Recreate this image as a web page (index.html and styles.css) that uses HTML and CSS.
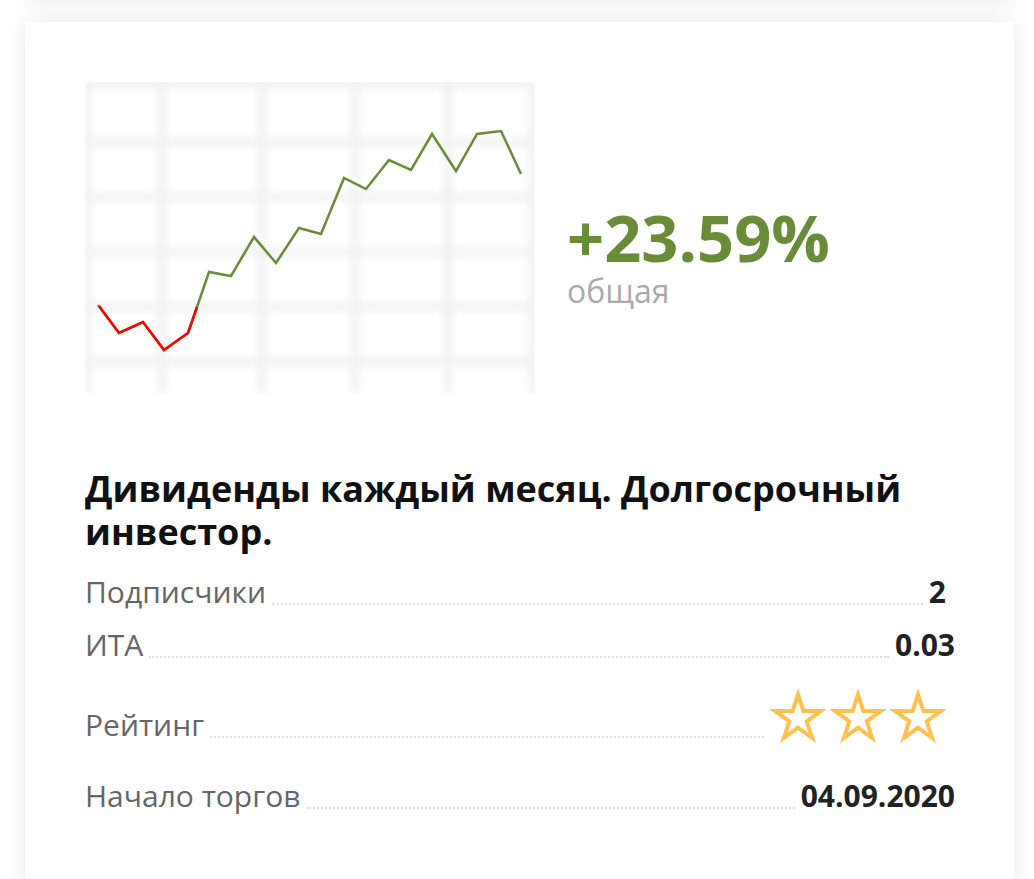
FILE: index.html
```html
<!DOCTYPE html>
<html lang="ru">

<head>
  <meta charset="UTF-8">
  <meta name="viewport" content="width=device-width, initial-scale=1.0">
  <title>Стратегии</title>
  <link rel="stylesheet" href="styles.css">
</head>

<body>
  <div class="feed">
    <div class="card card--prev"></div>

    <article class="card strategy">
      <div class="strategy__top">
        <svg class="chart" width="450" height="312" viewBox="0 0 450 312">
          <defs>
            <filter id="soft" x="-5%" y="-5%" width="110%" height="110%">
              <feGaussianBlur stdDeviation="4" />
            </filter>
          </defs>
          <rect width="450" height="312" fill="#fff" />
          <g class="chart__grid" filter="url(#soft)">
            <path d="M2 0V312M77 0V312M177 0V312M270 0V312M363 0V312M448 0V312" />
            <path d="M0 2H450M0 60H450M0 115H450M0 170H450M0 225H450M0 280H450" />
          </g>
          <polyline class="chart__up" points="13,223 34,251 58,240 79,268 103,251 112,225 124,190 146,194 169,155 191,181 214,146 236,152 259,96 281,107 304,78 326,88 347,52 371,89 392,52 416,49 436,92" />
          <polyline class="chart__down" points="14,224 34,251 58,240 79,268 103,251 112,225" />
        </svg>

        <div class="yield">
          <div class="yield__value">+23.59%</div>
          <div class="yield__label">общая</div>
        </div>
      </div>

      <h2 class="strategy__title">Дивиденды каждый месяц. Долгосрочный инвестор.</h2>

      <ul class="stats">
        <li class="stats__row">
          <span class="stats__label">Подписчики</span>
          <span class="stats__dots"></span>
          <span class="stats__value stats__value--inset">2</span>
        </li>
        <li class="stats__row">
          <span class="stats__label">ИТА</span>
          <span class="stats__dots"></span>
          <span class="stats__value">0.03</span>
        </li>
        <li class="stats__row stats__row--rating">
          <span class="stats__label">Рейтинг</span>
          <span class="stats__dots"></span>
          <span class="stars">
            <svg class="star" width="56" height="54" viewBox="0 0 56 54"><polygon points="28,5.5 33.39,22.08 50.83,22.08 36.72,32.33 42.11,48.92 28,38.67 13.89,48.92 19.28,32.33 5.17,22.08 22.61,22.08" /></svg>
            <svg class="star" width="56" height="54" viewBox="0 0 56 54"><polygon points="28,5.5 33.39,22.08 50.83,22.08 36.72,32.33 42.11,48.92 28,38.67 13.89,48.92 19.28,32.33 5.17,22.08 22.61,22.08" /></svg>
            <svg class="star" width="56" height="54" viewBox="0 0 56 54"><polygon points="28,5.5 33.39,22.08 50.83,22.08 36.72,32.33 42.11,48.92 28,38.67 13.89,48.92 19.28,32.33 5.17,22.08 22.61,22.08" /></svg>
          </span>
        </li>
        <li class="stats__row">
          <span class="stats__label">Начало торгов</span>
          <span class="stats__dots"></span>
          <span class="stats__value">04.09.2020</span>
        </li>
      </ul>
    </article>
  </div>
</body>

</html>
```

FILE: styles.css
```css
body {
  margin: 0;
  background: #fff;
  font-family: "Open Sans", Arial, sans-serif;
  overflow: hidden;
}

.feed {
  display: flex;
  flex-direction: column;
  gap: 22px;
  padding: 0 20px 0 25px;
}

.card {
  background: #fff;
  box-shadow: 0 0 22px rgba(0, 0, 0, 0.09);
}

.card--prev {
  height: 100px;
  margin-top: -100px;
}

.strategy {
  padding: 60px 59px 80px 60px;
}

.strategy__top {
  display: flex;
  align-items: center;
}

.chart {
  display: block;
  flex: none;
  margin-right: 32px;
}

.chart__grid path {
  stroke: #efefef;
  stroke-width: 7;
  fill: none;
}

.chart__up,
.chart__down {
  fill: none;
  stroke-width: 2.5;
  stroke-linejoin: miter;
}

.chart__up {
  stroke: #6a8b37;
}

.chart__down {
  stroke: #ff0000;
}

.yield {
  margin-top: 36px;
}

.yield__value {
  font-size: 65px;
  line-height: 68px;
  font-weight: 700;
  color: #6a8b37;
}

.yield__label {
  margin-top: 2px;
  font-size: 32px;
  line-height: 36px;
  color: #aaa;
}

.strategy__title {
  margin: 73px 0 5px;
  font-size: 36px;
  line-height: 43px;
  font-weight: 700;
  color: #111;
}

.stats {
  list-style: none;
  margin: 0;
  padding: 0;
}

.stats__row {
  display: flex;
  align-items: flex-end;
  padding-top: 15px;
}

.stats__row--rating {
  padding-top: 25px;
  padding-bottom: 18px;
}

.stats__label {
  font-size: 30px;
  line-height: 38px;
  color: #666;
}

.stats__dots {
  flex: 1;
  margin: 0 6px 6px;
  border-bottom: 2px dotted #ddd;
}

.stats__value {
  font-size: 30px;
  line-height: 38px;
  font-weight: 700;
  color: #222;
}

.stats__value--inset {
  margin-right: 9px;
}

.stars {
  display: flex;
  gap: 4px;
  margin-right: 9px;
  margin-bottom: 1px;
}

.star {
  display: block;
}

.star polygon {
  fill: none;
  stroke: #ffc14f;
  stroke-width: 4;
}
```
